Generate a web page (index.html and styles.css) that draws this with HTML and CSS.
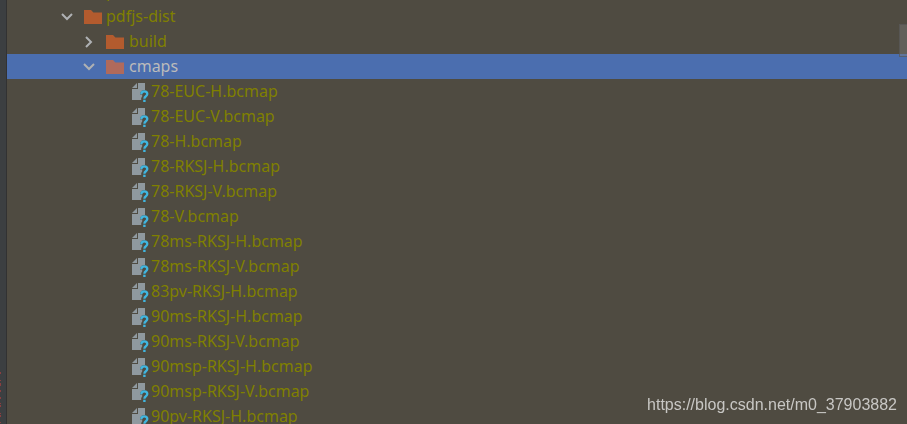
FILE: index.html
```html
<!DOCTYPE html>
<html lang="en">
<head>
    <meta charset="UTF-8">
    <meta name="viewport" content="width=device-width, initial-scale=1.0">
    <title>Project</title>
    <link rel="stylesheet" href="styles.css">
</head>
<body>
    <svg class="sprite" aria-hidden="true">
        <symbol id="chevron" viewBox="0 0 16 16">
            <path d="M3 5l5 5 5-5" fill="none" stroke="currentColor" stroke-width="2"/>
        </symbol>
        <symbol id="folder" viewBox="0 0 18 16">
            <path d="M0 1h7l2.400 2.500H18V15H0z" fill="currentColor"/>
        </symbol>
        <symbol id="unknown" viewBox="0 0 18 22">
            <path d="M6 2v5H1z" fill="#8f999f"/>
            <path d="M7 2h7v7c-3 0-5 1.300-5 4.400h2.200v2l-1 1.500v2.100H1V8h6z" fill="#8f999f"/>
            <path d="M10.300 13.300c0-2 1.200-3 3-3s3 1 3 2.700c0 2.300-2.900 2.200-2.900 4.700" fill="none" stroke="#40b6e0" stroke-width="2.300"/>
            <path d="M12.200 18.700h2.400v2.300h-2.400z" fill="#40b6e0"/>
        </symbol>
    </svg>

    <div class="window">
        <aside class="stripe">
            <svg class="marks" viewBox="0 0 2 54" aria-hidden="true">
                <path d="M.5 2v2M.5 10v1M.5 13v3M.5 20v2M.5 27v2M.5 33v1M.5 35v2M.5 43v1M.5 45v2M.5 52v1" stroke="#8a3f40"/>
            </svg>
        </aside>
        <main class="project">
            <ul class="tree">
                <li class="row package"><svg class="arrow collapsed"><use href="#chevron"/></svg><svg class="folder"><use href="#folder"/></svg>pbkdf2</li>
                <li class="row package"><svg class="arrow"><use href="#chevron"/></svg><svg class="folder"><use href="#folder"/></svg>pdfjs-dist</li>
                <li class="row dir"><svg class="arrow collapsed"><use href="#chevron"/></svg><svg class="folder"><use href="#folder"/></svg>build</li>
                <li class="row dir selected"><svg class="arrow"><use href="#chevron"/></svg><svg class="folder"><use href="#folder"/></svg>cmaps</li>
                <li class="row file"><svg class="icon"><use href="#unknown"/></svg>78-EUC-H.bcmap</li>
                <li class="row file"><svg class="icon"><use href="#unknown"/></svg>78-EUC-V.bcmap</li>
                <li class="row file"><svg class="icon"><use href="#unknown"/></svg>78-H.bcmap</li>
                <li class="row file"><svg class="icon"><use href="#unknown"/></svg>78-RKSJ-H.bcmap</li>
                <li class="row file"><svg class="icon"><use href="#unknown"/></svg>78-RKSJ-V.bcmap</li>
                <li class="row file"><svg class="icon"><use href="#unknown"/></svg>78-V.bcmap</li>
                <li class="row file"><svg class="icon"><use href="#unknown"/></svg>78ms-RKSJ-H.bcmap</li>
                <li class="row file"><svg class="icon"><use href="#unknown"/></svg>78ms-RKSJ-V.bcmap</li>
                <li class="row file"><svg class="icon"><use href="#unknown"/></svg>83pv-RKSJ-H.bcmap</li>
                <li class="row file"><svg class="icon"><use href="#unknown"/></svg>90ms-RKSJ-H.bcmap</li>
                <li class="row file"><svg class="icon"><use href="#unknown"/></svg>90ms-RKSJ-V.bcmap</li>
                <li class="row file"><svg class="icon"><use href="#unknown"/></svg>90msp-RKSJ-H.bcmap</li>
                <li class="row file"><svg class="icon"><use href="#unknown"/></svg>90msp-RKSJ-V.bcmap</li>
                <li class="row file"><svg class="icon"><use href="#unknown"/></svg>90pv-RKSJ-H.bcmap</li>
            </ul>
            <div class="scroll-thumb"></div>
        </main>
    </div>
    <div class="watermark">https://blog.csdn.net/m0_37903882</div>
</body>
</html>
```
FILE: styles.css
```css
* {
    box-sizing: border-box;
}
body {
    margin: 0;
    background: #4f4b41;
    color: #808000;
    font-family: "Noto Sans", "Open Sans", sans-serif;
    font-size: 16px;
    line-height: 25px;
}
.sprite {
    display: none;
}
.window {
    display: flex;
    height: 100vh;
    overflow: hidden;
}
.stripe {
    display: flex;
    align-items: flex-end;
    width: 7px;
    background: #3c3f41;
    border-right: 1px solid #323232;
}
.marks {
    width: 2px;
    height: 54px;
}
.project {
    position: relative;
    flex: 1;
}
/* scrolled so that the first row is almost out of view */
.tree {
    list-style: none;
    margin: -21px 0 0;
    padding: 0;
}
.row {
    display: flex;
    align-items: center;
    height: 25px;
    white-space: nowrap;
}
.package {
    padding-left: 52px;
}
.dir {
    padding-left: 74px;
}
.file {
    padding-left: 124px;
}
.selected {
    background: #4b6eaf;
    color: #bbbbbb;
}
.arrow {
    width: 16px;
    height: 16px;
    margin-right: 9px;
    color: #afb1b3;
}
.collapsed {
    transform: rotate(-90deg);
}
.folder {
    width: 18px;
    height: 16px;
    margin-right: 4px;
    color: #b35b2e;
}
.dir .folder {
    margin-right: 5px;
}
.selected .folder {
    color: #b06a5c;
}
.icon {
    width: 18px;
    height: 22px;
    margin-right: 2px;
}
.scroll-thumb {
    position: absolute;
    top: 24px;
    right: 0;
    width: 8px;
    height: 33px;
    background: rgba(128, 128, 128, 0.4);
    border: 1px solid rgba(80, 80, 80, 0.6);
    border-right: 0;
}
.watermark {
    position: fixed;
    right: 10px;
    bottom: 7px;
    color: #c8c7c4;
    font-family: "Liberation Sans", Arial, sans-serif;
    font-size: 16px;
}
```
